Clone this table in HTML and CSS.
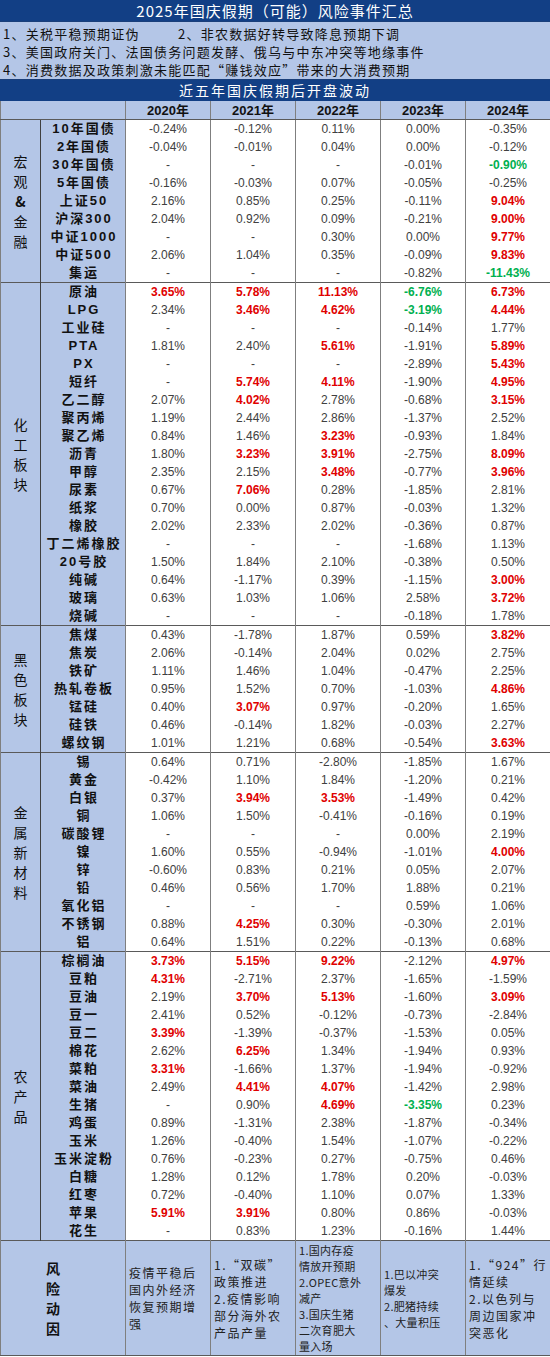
FILE: index.html
```html
<!DOCTYPE html>
<html lang="zh-CN">
<head>
<meta charset="utf-8">
<title>2025年国庆假期（可能）风险事件汇总</title>
<link rel="stylesheet" href="styles.css">
</head>
<body>
<div class="sheet">
  <div class="title">2025年国庆假期（可能）风险事件汇总</div>
  <div class="events">
    <div><span class="ev1">1、关税平稳预期证伪</span><span>2、非农数据好转导致降息预期下调</span></div>
    <div>3、美国政府关门、法国债务问题发酵、俄乌与中东冲突等地缘事件</div>
    <div>4、消费数据及政策刺激未能匹配“赚钱效应”带来的大消费预期</div>
  </div>
  <div class="subtitle">近五年国庆假期后开盘波动</div>
  <table class="grid">
    <colgroup>
      <col class="c-sec"><col class="c-nm"><col class="c-d"><col class="c-d"><col class="c-d"><col class="c-d"><col class="c-d">
    </colgroup>
    <thead>
      <tr class="hdr"><th colspan="2"></th><th>2020年</th><th>2021年</th><th>2022年</th><th>2023年</th><th>2024年</th></tr>
    </thead>
    <tbody>
      <tr class="first"><td class="sec" rowspan="9"><div class="vt">宏<br>观<br><b>&amp;</b><br>金<br>融</div></td><th class="nm">10年国债</th><td>-0.24%</td><td>-0.12%</td><td>0.11%</td><td>0.00%</td><td>-0.35%</td></tr>
      <tr><th class="nm">2年国债</th><td>-0.04%</td><td>-0.01%</td><td>0.04%</td><td>0.00%</td><td>-0.12%</td></tr>
      <tr><th class="nm">30年国债</th><td>-</td><td>-</td><td>-</td><td>-0.01%</td><td class="g">-0.90%</td></tr>
      <tr><th class="nm">5年国债</th><td>-0.16%</td><td>-0.03%</td><td>0.07%</td><td>-0.05%</td><td>-0.25%</td></tr>
      <tr><th class="nm">上证50</th><td>2.16%</td><td>0.85%</td><td>0.25%</td><td>-0.11%</td><td class="r">9.04%</td></tr>
      <tr><th class="nm">沪深300</th><td>2.04%</td><td>0.92%</td><td>0.09%</td><td>-0.21%</td><td class="r">9.00%</td></tr>
      <tr><th class="nm">中证1000</th><td>-</td><td>-</td><td>0.30%</td><td>0.00%</td><td class="r">9.77%</td></tr>
      <tr><th class="nm">中证500</th><td>2.06%</td><td>1.04%</td><td>0.35%</td><td>-0.09%</td><td class="r">9.83%</td></tr>
      <tr><th class="nm">集运</th><td>-</td><td>-</td><td>-</td><td>-0.82%</td><td class="g">-11.43%</td></tr>

      <tr class="first"><td class="sec" rowspan="19"><div class="vt">化<br>工<br>板<br>块</div></td><th class="nm">原油</th><td class="r">3.65%</td><td class="r">5.78%</td><td class="r">11.13%</td><td class="g">-6.76%</td><td class="r">6.73%</td></tr>
      <tr><th class="nm">LPG</th><td>2.34%</td><td class="r">3.46%</td><td class="r">4.62%</td><td class="g">-3.19%</td><td class="r">4.44%</td></tr>
      <tr><th class="nm">工业硅</th><td>-</td><td>-</td><td>-</td><td>-0.14%</td><td>1.77%</td></tr>
      <tr><th class="nm">PTA</th><td>1.81%</td><td>2.40%</td><td class="r">5.61%</td><td>-1.91%</td><td class="r">5.89%</td></tr>
      <tr><th class="nm">PX</th><td>-</td><td>-</td><td>-</td><td>-2.89%</td><td class="r">5.43%</td></tr>
      <tr><th class="nm">短纤</th><td>-</td><td class="r">5.74%</td><td class="r">4.11%</td><td>-1.90%</td><td class="r">4.95%</td></tr>
      <tr><th class="nm">乙二醇</th><td>2.07%</td><td class="r">4.02%</td><td>2.78%</td><td>-0.68%</td><td class="r">3.15%</td></tr>
      <tr><th class="nm">聚丙烯</th><td>1.19%</td><td>2.44%</td><td>2.86%</td><td>-1.37%</td><td>2.52%</td></tr>
      <tr><th class="nm">聚乙烯</th><td>0.84%</td><td>1.46%</td><td class="r">3.23%</td><td>-0.93%</td><td>1.84%</td></tr>
      <tr><th class="nm">沥青</th><td>1.80%</td><td class="r">3.23%</td><td class="r">3.91%</td><td>-2.75%</td><td class="r">8.09%</td></tr>
      <tr><th class="nm">甲醇</th><td>2.35%</td><td>2.15%</td><td class="r">3.48%</td><td>-0.77%</td><td class="r">3.96%</td></tr>
      <tr><th class="nm">尿素</th><td>0.67%</td><td class="r">7.06%</td><td>0.28%</td><td>-1.85%</td><td>2.81%</td></tr>
      <tr><th class="nm">纸浆</th><td>0.70%</td><td>0.00%</td><td>0.87%</td><td>-0.03%</td><td>1.32%</td></tr>
      <tr><th class="nm">橡胶</th><td>2.02%</td><td>2.33%</td><td>2.02%</td><td>-0.36%</td><td>0.87%</td></tr>
      <tr><th class="nm">丁二烯橡胶</th><td>-</td><td>-</td><td>-</td><td>-1.68%</td><td>1.13%</td></tr>
      <tr><th class="nm">20号胶</th><td>1.50%</td><td>1.84%</td><td>2.10%</td><td>-0.38%</td><td>0.50%</td></tr>
      <tr><th class="nm">纯碱</th><td>0.64%</td><td>-1.17%</td><td>0.39%</td><td>-1.15%</td><td class="r">3.00%</td></tr>
      <tr><th class="nm">玻璃</th><td>0.63%</td><td>1.03%</td><td>1.06%</td><td>2.58%</td><td class="r">3.72%</td></tr>
      <tr><th class="nm">烧碱</th><td>-</td><td>-</td><td>-</td><td>-0.18%</td><td>1.78%</td></tr>

      <tr class="first"><td class="sec" rowspan="7"><div class="vt">黑<br>色<br>板<br>块</div></td><th class="nm">焦煤</th><td>0.43%</td><td>-1.78%</td><td>1.87%</td><td>0.59%</td><td class="r">3.82%</td></tr>
      <tr><th class="nm">焦炭</th><td>2.06%</td><td>-0.14%</td><td>2.04%</td><td>0.02%</td><td>2.75%</td></tr>
      <tr><th class="nm">铁矿</th><td>1.11%</td><td>1.46%</td><td>1.04%</td><td>-0.47%</td><td>2.25%</td></tr>
      <tr><th class="nm">热轧卷板</th><td>0.95%</td><td>1.52%</td><td>0.70%</td><td>-1.03%</td><td class="r">4.86%</td></tr>
      <tr><th class="nm">锰硅</th><td>0.40%</td><td class="r">3.07%</td><td>0.97%</td><td>-0.20%</td><td>1.65%</td></tr>
      <tr><th class="nm">硅铁</th><td>0.46%</td><td>-0.14%</td><td>1.82%</td><td>-0.03%</td><td>2.27%</td></tr>
      <tr><th class="nm">螺纹钢</th><td>1.01%</td><td>1.21%</td><td>0.68%</td><td>-0.54%</td><td class="r">3.63%</td></tr>

      <tr class="first"><td class="sec" rowspan="11"><div class="vt">金<br>属<br>新<br>材<br>料</div></td><th class="nm">锡</th><td>0.64%</td><td>0.71%</td><td>-2.80%</td><td>-1.85%</td><td>1.67%</td></tr>
      <tr><th class="nm">黄金</th><td>-0.42%</td><td>1.10%</td><td>1.84%</td><td>-1.20%</td><td>0.21%</td></tr>
      <tr><th class="nm">白银</th><td>0.37%</td><td class="r">3.94%</td><td class="r">3.53%</td><td>-1.49%</td><td>0.42%</td></tr>
      <tr><th class="nm">铜</th><td>1.06%</td><td>1.50%</td><td>-0.41%</td><td>-0.16%</td><td>0.19%</td></tr>
      <tr><th class="nm">碳酸锂</th><td>-</td><td>-</td><td>-</td><td>0.00%</td><td>2.19%</td></tr>
      <tr><th class="nm">镍</th><td>1.60%</td><td>0.55%</td><td>-0.94%</td><td>-1.01%</td><td class="r">4.00%</td></tr>
      <tr><th class="nm">锌</th><td>-0.60%</td><td>0.83%</td><td>0.21%</td><td>0.05%</td><td>2.07%</td></tr>
      <tr><th class="nm">铅</th><td>0.46%</td><td>0.56%</td><td>1.70%</td><td>1.88%</td><td>0.21%</td></tr>
      <tr><th class="nm">氧化铝</th><td>-</td><td>-</td><td>-</td><td>0.59%</td><td>1.06%</td></tr>
      <tr><th class="nm">不锈钢</th><td>0.88%</td><td class="r">4.25%</td><td>0.30%</td><td>-0.30%</td><td>2.01%</td></tr>
      <tr><th class="nm">铝</th><td>0.64%</td><td>1.51%</td><td>0.22%</td><td>-0.13%</td><td>0.68%</td></tr>

      <tr class="first"><td class="sec" rowspan="16"><div class="vt">农<br>产<br>品</div></td><th class="nm">棕榈油</th><td class="r">3.73%</td><td class="r">5.15%</td><td class="r">9.22%</td><td>-2.12%</td><td class="r">4.97%</td></tr>
      <tr><th class="nm">豆粕</th><td class="r">4.31%</td><td>-2.71%</td><td>2.37%</td><td>-1.65%</td><td>-1.59%</td></tr>
      <tr><th class="nm">豆油</th><td>2.19%</td><td class="r">3.70%</td><td class="r">5.13%</td><td>-1.60%</td><td class="r">3.09%</td></tr>
      <tr><th class="nm">豆一</th><td>2.41%</td><td>0.52%</td><td>-0.12%</td><td>-0.73%</td><td>-2.84%</td></tr>
      <tr><th class="nm">豆二</th><td class="r">3.39%</td><td>-1.39%</td><td>-0.37%</td><td>-1.53%</td><td>0.05%</td></tr>
      <tr><th class="nm">棉花</th><td>2.62%</td><td class="r">6.25%</td><td>1.34%</td><td>-1.94%</td><td>0.93%</td></tr>
      <tr><th class="nm">菜粕</th><td class="r">3.31%</td><td>-1.66%</td><td>1.37%</td><td>-1.94%</td><td>-0.92%</td></tr>
      <tr><th class="nm">菜油</th><td>2.49%</td><td class="r">4.41%</td><td class="r">4.07%</td><td>-1.42%</td><td>2.98%</td></tr>
      <tr><th class="nm">生猪</th><td>-</td><td>0.90%</td><td class="r">4.69%</td><td class="g">-3.35%</td><td>0.23%</td></tr>
      <tr><th class="nm">鸡蛋</th><td>0.89%</td><td>-1.31%</td><td>2.38%</td><td>-1.87%</td><td>-0.34%</td></tr>
      <tr><th class="nm">玉米</th><td>1.26%</td><td>-0.40%</td><td>1.54%</td><td>-1.07%</td><td>-0.22%</td></tr>
      <tr><th class="nm">玉米淀粉</th><td>0.76%</td><td>-0.23%</td><td>0.27%</td><td>-0.75%</td><td>0.46%</td></tr>
      <tr><th class="nm">白糖</th><td>1.28%</td><td>0.12%</td><td>1.78%</td><td>0.20%</td><td>-0.03%</td></tr>
      <tr><th class="nm">红枣</th><td>0.72%</td><td>-0.40%</td><td>1.10%</td><td>0.07%</td><td>1.33%</td></tr>
      <tr><th class="nm">苹果</th><td class="r">5.91%</td><td class="r">3.91%</td><td>0.80%</td><td>0.86%</td><td>-0.03%</td></tr>
      <tr><th class="nm">花生</th><td>-</td><td>0.83%</td><td>1.23%</td><td>-0.16%</td><td>1.44%</td></tr>

      <tr class="risk">
        <td colspan="2" class="risk-label"><div class="vt2">风<br>险<br>动<br>因</div></td>
        <td class="rt">疫情平稳后<br>国内外经济<br>恢复预期增<br>强</td>
        <td class="rt">1.“双碳”<br>政策推进<br>2.疫情影响<br>部分海外农<br>产品产量</td>
        <td class="rt sm">1.国内存疫<br>情放开预期<br>2.OPEC意外<br>减产<br>3.国庆生猪<br>二次育肥大<br>量入场</td>
        <td class="rt sm">1.巴以冲突<br>爆发<br>2.肥猪持续<br>、大量积压</td>
        <td class="rt">1.“924”行<br>情延续<br>2.以色列与<br>周边国家冲<br>突恶化</td>
      </tr>
    </tbody>
  </table>
</div>
</body>
</html>
```

FILE: styles.css
```css
html, body { margin: 0; padding: 0; background: #ffffff; }
body {
  font-family: "Liberation Sans", "Noto Sans CJK SC", sans-serif;
  color: #222;
}
.sheet { width: 550px; }

.title {
  box-sizing: border-box;
  height: 21px;
  background: #123f85;
  color: #ffffff;
  font-family: "Noto Sans CJK SC", sans-serif;
  font-size: 15px;
  line-height: 21px;
  letter-spacing: 1px;
  text-align: center;
}

.events {
  box-sizing: border-box;
  height: 59px;
  background: #b4c6e7;
  padding: 3px 0 2px 3px;
  font-family: "Noto Sans CJK SC", sans-serif;
  font-size: 13px;
  line-height: 18px;
  letter-spacing: 1.25px;
  color: #111;
  border-top: 1px solid #1a3f7a;
  border-bottom: 1px solid #1a3f7a;
  white-space: nowrap;
}
.events .ev1 { display: inline-block; width: 175px; }

.subtitle {
  box-sizing: border-box;
  height: 21px;
  background: #123f85;
  color: #ffffff;
  font-family: "Noto Sans CJK SC", sans-serif;
  font-size: 14px;
  line-height: 21px;
  letter-spacing: 2px;
  text-align: center;
}

.grid {
  width: 550px;
  border-collapse: collapse;
  table-layout: fixed;
}
.c-sec { width: 40px; }
.c-nm { width: 85px; }
.c-d { width: 85px; }

.grid th, .grid td {
  box-sizing: content-box;
  padding: 0;
  border-left: 1px solid #7f7f7f;
  border-right: 1px solid #7f7f7f;
  text-align: center;
  white-space: nowrap;
  overflow: hidden;
}

.hdr th {
  height: 18px;
  line-height: 17px;
  background: #b4c6e7;
  font-size: 13px;
  font-weight: 700;
  color: #111;
  border-bottom: 1px solid #5a5a5a;
}

.grid tbody td, .grid tbody th.nm {
  height: 18px;
  line-height: 16px;
}
.grid tbody td {
  font-size: 12px;
  color: #404040;
  background: #ffffff;
}

.grid th.nm {
  background: #b4c6e7;
  font-family: "Liberation Sans", "Noto Sans CJK SC", sans-serif;
  font-size: 13px;
  font-weight: 700;
  letter-spacing: 2px;
  padding-left: 2px;
  color: #111;
}

.grid td.sec {
  background: #b4c6e7;
  border-right: 1px solid #404040;
  vertical-align: middle;
  height: auto;
}
.vt {
  font-family: "Noto Sans CJK SC", sans-serif;
  font-size: 14px;
  line-height: 20px;
  color: #111;
}

.grid td.r { color: #e00000; font-weight: 700; }
.grid td.g { color: #00b050; font-weight: 700; }

.grid tr.first > td, .grid tr.first > th {
  border-top: 1px solid #5a5a5a;
}

.grid tr.risk > td {
  height: 114px;
  line-height: normal;
  background: #b4c6e7;
  border-top: 1px solid #5a5a5a;
  border-bottom: 1px solid #5a5a5a;
  vertical-align: middle;
}
.grid td.risk-label { padding-right: 20px; }
.vt2 {
  font-family: "Noto Sans CJK SC", sans-serif;
  font-size: 14px;
  font-weight: 700;
  line-height: 20px;
  color: #111;
}
.grid td.rt {
  text-align: left;
  padding-left: 3px;
  font-family: "Noto Sans CJK SC", sans-serif;
  font-size: 12px;
  line-height: 16.5px;
  letter-spacing: 1.5px;
  color: #222;
}
.grid td.rt.sm {
  font-size: 11px;
  letter-spacing: 0.3px;
  line-height: 16px;
}
```
